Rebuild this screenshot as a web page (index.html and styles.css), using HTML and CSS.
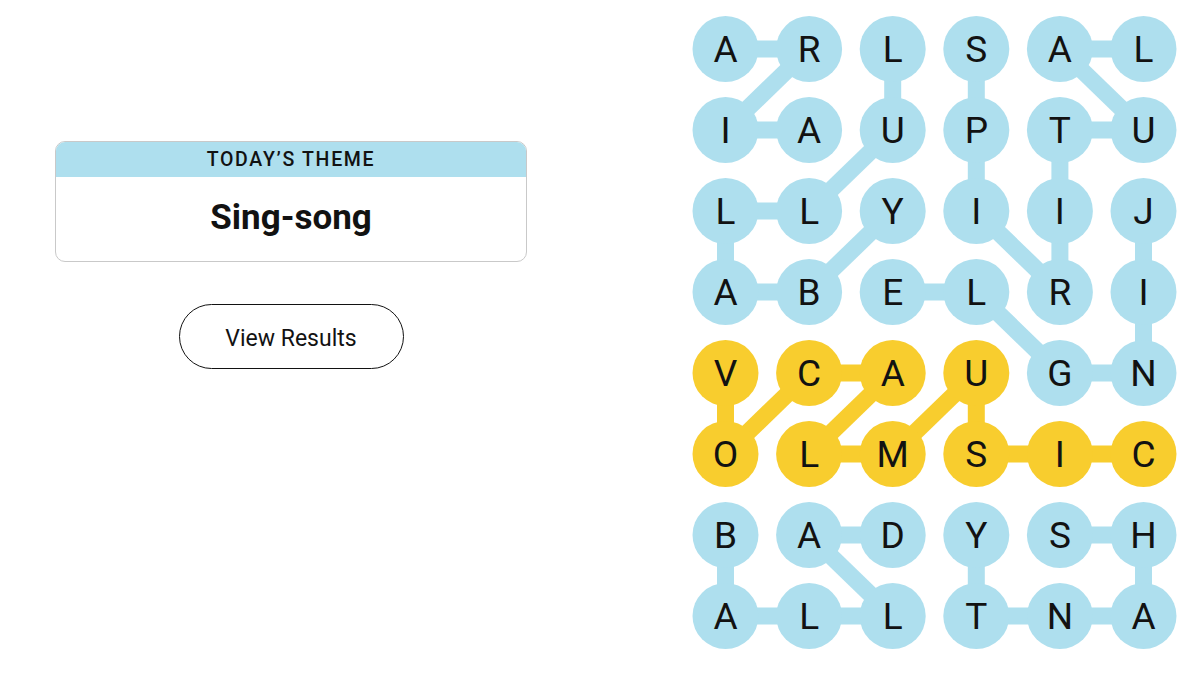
FILE: index.html
```html
<!DOCTYPE html>
<html lang="en">
<head>
<meta charset="utf-8">
<title>Strands</title>
<link rel="stylesheet" href="styles.css">
</head>
<body>
<main class="page">
  <section class="side">
    <div class="theme-card">
      <div class="theme-head">TODAY’S THEME</div>
      <div class="theme-body">Sing-song</div>
    </div>
    <button class="results-btn" type="button">View Results</button>
  </section>
  <section class="board">
    <svg class="board-svg" width="486" height="634" viewBox="0 0 486 634" xmlns="http://www.w3.org/2000/svg">
      <g id="lines"></g>
      <g id="nodes"></g>
    </svg>
  </section>
</main>
<script src="board.js"></script>
</body>
</html>
```
FILE: styles.css
```css
html, body {
  margin: 0;
  padding: 0;
  background: #ffffff;
}
body {
  font-family: Roboto, "Liberation Sans", Arial, sans-serif;
  color: #121212;
}
.page {
  display: flex;
  width: 1202px;
  height: 676px;
}
.side {
  width: 582px;
  display: flex;
  flex-direction: column;
  align-items: center;
  padding-top: 141px;
  box-sizing: border-box;
}
.theme-card {
  width: 472px;
  box-sizing: border-box;
  border: 1px solid #c9c9c9;
  border-radius: 10px;
  overflow: hidden;
}
.theme-head {
  height: 35px;
  background: #aedfee;
  text-align: center;
  font-size: 19.5px;
  font-weight: 500;
  letter-spacing: 1.7px;
  line-height: 36px;
}
.theme-body {
  height: 84px;
  text-align: center;
  font-family: Roboto, "Liberation Sans", Arial, sans-serif;
  font-size: 35px;
  font-weight: 700;
  line-height: 82px;
}
.results-btn {
  margin-top: 42px;
  width: 225px;
  height: 65px;
  border: 1px solid #121212;
  border-radius: 33px;
  background: #ffffff;
  color: #121212;
  font-family: Roboto, "Liberation Sans", Arial, sans-serif;
  font-size: 23px;
  padding: 3px 0 0 0;
}
.board {
  margin-left: 110px;
  padding-top: 16px;
}
.board-svg {
  display: block;
}
.node-text {
  font-family: Roboto, "Liberation Sans", Arial, sans-serif;
  font-size: 37px;
  fill: #121212;
}
```
FILE: board.js
```js
(function () {
  var grid = ["ARLSAL", "IAUPTU", "LLYIIJ", "ABELRI", "VCAUGN", "OLMSIC", "BADYSH", "ALLTNA"];
  var BLUE = "#aedfee", YELLOW = "#f8cd2e";
  var words = [
    { c: BLUE, p: [[0,0],[0,1],[1,0],[1,1]] },
    { c: BLUE, p: [[0,2],[1,2],[2,1],[2,0],[3,0],[3,1],[2,2]] },
    { c: BLUE, p: [[0,3],[1,3],[2,3],[3,4],[2,4],[1,4],[1,5],[0,4],[0,5]] },
    { c: BLUE, p: [[3,2],[3,3],[4,4],[4,5],[3,5],[2,5]] },
    { c: YELLOW, p: [[4,0],[5,0],[4,1],[4,2],[5,1],[5,2],[4,3],[5,3],[5,4],[5,5]] },
    { c: BLUE, p: [[6,0],[7,0],[7,1],[7,2],[6,1],[6,2]] },
    { c: BLUE, p: [[6,3],[7,3],[7,4],[7,5],[6,5],[6,4]] }
  ];
  var NS = "http://www.w3.org/2000/svg";
  var lines = document.getElementById("lines");
  var nodes = document.getElementById("nodes");
  function cx(c) { return 33.5 + c * 83.6; }
  function cy(r) { return 33 + r * 81; }
  var colorOf = {};
  words.forEach(function (w) {
    for (var i = 0; i < w.p.length; i++) {
      colorOf[w.p[i][0] + "," + w.p[i][1]] = w.c;
      if (i > 0) {
        var a = w.p[i - 1], b = w.p[i];
        var l = document.createElementNS(NS, "line");
        l.setAttribute("x1", cx(a[1])); l.setAttribute("y1", cy(a[0]));
        l.setAttribute("x2", cx(b[1])); l.setAttribute("y2", cy(b[0]));
        l.setAttribute("stroke", w.c); l.setAttribute("stroke-width", "17");
        lines.appendChild(l);
      }
    }
  });
  for (var r = 0; r < 8; r++) {
    for (var c = 0; c < 6; c++) {
      var circ = document.createElementNS(NS, "circle");
      circ.setAttribute("cx", cx(c)); circ.setAttribute("cy", cy(r)); circ.setAttribute("r", "33");
      circ.setAttribute("fill", colorOf[r + "," + c] || BLUE);
      nodes.appendChild(circ);
      var t = document.createElementNS(NS, "text");
      t.setAttribute("x", cx(c)); t.setAttribute("y", cy(r) + 13);
      t.setAttribute("text-anchor", "middle");
      t.setAttribute("class", "node-text");
      t.textContent = grid[r][c];
      nodes.appendChild(t);
    }
  }
})();
```
